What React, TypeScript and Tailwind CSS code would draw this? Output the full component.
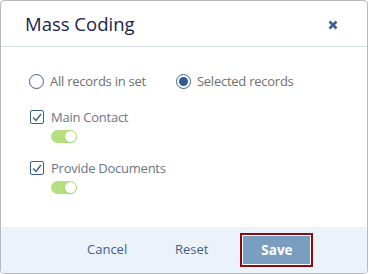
import { useState } from 'react'

function Toggle({ on }: { on: boolean }) {
  return (
    <div className={`relative w-[26px] h-[13px] rounded-full ${on ? 'bg-[#b4e07f]' : 'bg-gray-300'}`}>
      <div className={`absolute top-[1px] w-[11px] h-[11px] rounded-full bg-white shadow-sm ${on ? 'right-[1px]' : 'left-[1px]'}`} />
    </div>
  )
}

function Check({ label }: { label: string }) {
  return (
    <div className="flex flex-col">
      <div className="flex items-center gap-[7px] h-[18px]">
        <div className="w-[14px] h-[14px] border border-[#3d5f8f] rounded-[2px] flex items-center justify-center bg-white">
          <svg width="10" height="9" viewBox="0 0 10 9" fill="none">
            <path d="M1 4.5 L4 7.5 L9 1" stroke="#3d5f8f" strokeWidth="1.4" />
          </svg>
        </div>
        <span className="text-[13px] leading-[18px] tracking-[-0.25px] text-[#6d7584]">{label}</span>
      </div>
      <div className="ml-[21px] mt-[4px]">
        <Toggle on />
      </div>
    </div>
  )
}

export default function App() {
  const [scope, setScope] = useState<'all' | 'selected'>('selected')

  return (
    <div
      className="w-[368px] h-[274px] bg-white border border-[#b9b9b9] rounded-[4px] flex flex-col overflow-hidden"
      style={{ fontFamily: '"Open Sans", "Noto Sans", sans-serif' }}
    >
      <div className="h-[46px] shrink-0 flex items-center justify-between pl-[24px] pr-[29px] border-b border-[#d5dce6]">
        <span className="text-[18.5px] text-[#201e4c] leading-none mt-[1px]">Mass Coding</span>
        <svg width="10" height="10" viewBox="0 0 10 10" className="mt-[2px]">
          <path d="M1.5 1.5 L8.5 8.5 M8.5 1.5 L1.5 8.5" stroke="#3d5f8f" strokeWidth="2.6" />
        </svg>
      </div>

      <div className="flex-1 pl-[28px] pt-[25px]">
        <div className="flex items-center gap-[30px] h-[18px]">
          <button className="flex items-center gap-[6px]" onClick={() => setScope('all')}>
            <span className="w-[15px] h-[15px] rounded-full border border-[#3d5f8f] flex items-center justify-center">
              {scope === 'all' && <span className="w-[9px] h-[9px] rounded-full bg-[#2f5a94]" />}
            </span>
            <span className="text-[13px] leading-[18px] tracking-[-0.25px] text-[#707070]">All records in set</span>
          </button>
          <button className="flex items-center gap-[6px]" onClick={() => setScope('selected')}>
            <span className="w-[15px] h-[15px] rounded-full border border-[#3d5f8f] flex items-center justify-center">
              {scope === 'selected' && <span className="w-[9px] h-[9px] rounded-full bg-[#2f5a94]" />}
            </span>
            <span className="text-[13px] leading-[18px] tracking-[-0.25px] text-[#707070]">Selected records</span>
          </button>
        </div>

        <div className="flex flex-col gap-[16px] mt-[18px] ml-[1px]">
          <Check label="Main Contact" />
          <Check label="Provide Documents" />
        </div>
      </div>

      <div className="h-[46px] shrink-0 bg-[#ebf2f9] flex items-center pl-[86px]">
        <button className="w-[40px] text-[13px] text-[#3d5f8f] text-center">Cancel</button>
        <button className="ml-[48px] text-[13px] text-[#3d5f8f]">Reset</button>
        <button className="ml-[32px] w-[73px] h-[34px] bg-[#7a9ec0] border-2 border-[#8a0c12] shadow-[inset_0_0_0_1px_#ffffff] text-white text-[13.5px] font-bold">
          Save
        </button>
      </div>
    </div>
  )
}
